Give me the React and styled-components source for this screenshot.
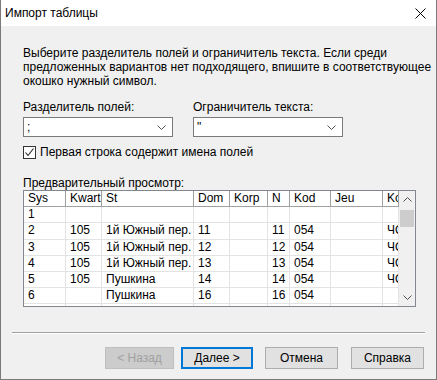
import React from 'react'
import styled, { createGlobalStyle } from 'styled-components'

const GlobalStyle = createGlobalStyle`
  html, body {
    margin: 0;
    padding: 0;
    background: #f0f0f0;
  }
  * {
    box-sizing: border-box;
  }
`

const columns = [
  { key: 'sys', title: 'Sys', width: 42 },
  { key: 'kwart', title: 'Kwart', width: 36 },
  { key: 'st', title: 'St', width: 92 },
  { key: 'dom', title: 'Dom', width: 36 },
  { key: 'korp', title: 'Korp', width: 38 },
  { key: 'n', title: 'N', width: 22 },
  { key: 'kod', title: 'Kod', width: 41 },
  { key: 'jeu', title: 'Jeu', width: 52 },
  { key: 'ko', title: 'Kod_ul', width: 16 },
]

const rows = [
  { sys: '1' },
  { sys: '2', kwart: '105', st: '1й Южный пер.', dom: '11', n: '11', kod: '054', ko: 'ЧО' },
  { sys: '3', kwart: '105', st: '1й Южный пер.', dom: '12', n: '12', kod: '054', ko: 'ЧО' },
  { sys: '4', kwart: '105', st: '1й Южный пер.', dom: '13', n: '13', kod: '054', ko: 'ЧО' },
  { sys: '5', kwart: '105', st: 'Пушкина', dom: '14', n: '14', kod: '054', ko: 'ЧО' },
  { sys: '6', st: 'Пушкина', dom: '16', n: '16', kod: '054' },
  { sys: '7', kwart: '105', st: 'Пушкина', dom: '18', n: '18', kod: '054', ko: 'ЧО' },
]

function Chevron({ up }) {
  return (
    <svg width="9" height="5" viewBox="0 0 9 5">
      <path
        d={up ? 'M0.5 4.5 L4.5 0.5 L8.5 4.5' : 'M0.5 0.5 L4.5 4.5 L8.5 0.5'}
        fill="none"
        stroke="#505050"
        strokeWidth="1"
      />
    </svg>
  )
}

function Combo({ value }) {
  return (
    <ComboBox>
      <ComboValue>{value}</ComboValue>
      <Chevron />
    </ComboBox>
  )
}

function App() {
  return (
    <>
      <GlobalStyle />
      <Window>
        <TitleBar>
          <Title>Импорт таблицы</Title>
          <CloseButton>
            <svg width="11" height="11" viewBox="0 0 11 11">
              <path d="M0.5 0.5 L10.5 10.5 M10.5 0.5 L0.5 10.5" stroke="#000" strokeWidth="1" />
            </svg>
          </CloseButton>
        </TitleBar>

        <Body>
          <Content>
            <Description>
              Выберите разделитель полей и ограничитель текста. Если среди
              <br />
              предложенных вариантов нет подходящего, впишите в соответствующее
              <br />
              окошко нужный символ.
            </Description>

            <FieldRow>
              <Field>
                <Label>Разделитель полей:</Label>
                <Combo value=";" />
              </Field>
              <Field>
                <Label>Ограничитель текста:</Label>
                <Combo value={'"'} />
              </Field>
            </FieldRow>

            <CheckRow>
              <CheckBox>
                <svg width="11" height="11" viewBox="0 0 11 11">
                  <path d="M1.5 5.5 L4 8.5 L9.5 1.5" fill="none" stroke="#222" strokeWidth="1.1" />
                </svg>
              </CheckBox>
              <span>Первая строка содержит имена полей</span>
            </CheckRow>

            <PreviewLabel>Предварительный просмотр:</PreviewLabel>

            <GridFrame>
              <GridViewport>
                <Grid $cols={columns.map((c) => c.width + 'px').join(' ')}>
                  {columns.map((c) => (
                    <HeadCell key={c.key}>{c.title}</HeadCell>
                  ))}
                  {rows.map((r, i) =>
                    columns.map((c) => <Cell key={i + c.key}>{r[c.key] || ''}</Cell>)
                  )}
                </Grid>
              </GridViewport>
              <ScrollBar>
                <ScrollArrow>
                  <Chevron up />
                </ScrollArrow>
                <Thumb />
                <ScrollTrack />
                <ScrollArrow>
                  <Chevron />
                </ScrollArrow>
              </ScrollBar>
            </GridFrame>
          </Content>

          <Footer>
            <Separator />
            <ButtonRow>
              <Button $width={69} disabled>
                &lt; Назад
              </Button>
              <Button $width={72} $gap={7} $default>
                Далее &gt;
              </Button>
              <Button $width={73} $gap={12}>
                Отмена
              </Button>
              <Button $width={73} $gap={13}>
                Справка
              </Button>
            </ButtonRow>
          </Footer>
        </Body>
      </Window>
    </>
  )
}

const Window = styled.div`
  width: 437px;
  height: 380px;
  display: flex;
  flex-direction: column;
  border: 1px solid #7a7a7a;
  border-top: none;
  background: #f0f0f0;
  font-family: 'Liberation Sans', Arial, sans-serif;
  font-size: 12px;
  color: #000;
  overflow: hidden;
`

const TitleBar = styled.div`
  height: 26px;
  flex: none;
  display: flex;
  align-items: center;
  justify-content: space-between;
  background: #fff;
  padding: 0 10px 0 4px;
`

const Title = styled.div`
  font-size: 12px;
  line-height: 14px;
`

const CloseButton = styled.div`
  display: flex;
  align-items: center;
`

const Body = styled.div`
  flex: 1;
  display: flex;
  flex-direction: column;
`

const Content = styled.div`
  padding: 20px 20px 0 22px;
  display: flex;
  flex-direction: column;
`

const Description = styled.div`
  line-height: 14px;
  white-space: nowrap;
`

const FieldRow = styled.div`
  display: flex;
  gap: 20px;
  margin-top: 12px;
`

const Field = styled.div`
  display: flex;
  flex-direction: column;
  gap: 3px;
`

const Label = styled.div`
  line-height: 14px;
`

const ComboBox = styled.div`
  width: 150px;
  height: 20px;
  background: #fff;
  border: 1px solid #7a7a7a;
  display: flex;
  align-items: center;
  justify-content: space-between;
  padding: 0 6px 0 3px;
`

const ComboValue = styled.span`
  line-height: 14px;
`

const CheckRow = styled.div`
  display: flex;
  align-items: center;
  gap: 4px;
  margin-top: 8px;
  line-height: 14px;
`

const CheckBox = styled.div`
  width: 13px;
  height: 13px;
  background: #fff;
  border: 1px solid #333;
  display: flex;
  align-items: center;
  justify-content: center;
`

const PreviewLabel = styled.div`
  margin-top: 18px;
  line-height: 13px;
`

const GridFrame = styled.div`
  width: 393px;
  height: 117px;
  border: 1px solid #828790;
  display: flex;
  background: #fff;
`

const GridViewport = styled.div`
  flex: 1;
  overflow: hidden;
`

const Grid = styled.div`
  display: grid;
  grid-template-columns: ${(p) => p.$cols};
  grid-auto-rows: 16.2px;
`

const Cell = styled.div`
  border-right: 1px solid #e3e3e3;
  border-bottom: 1px solid #e3e3e3;
  padding-left: 4px;
  line-height: 14.5px;
  white-space: nowrap;
  overflow: hidden;
`

const HeadCell = styled(Cell)`
  border-right-color: #a0a0a0;
  border-bottom-color: #a0a0a0;
`

const ScrollBar = styled.div`
  width: 16px;
  flex: none;
  background: #f0f0f0;
  display: flex;
  flex-direction: column;
`

const ScrollArrow = styled.div`
  height: 17px;
  display: flex;
  align-items: center;
  justify-content: center;
`

const Thumb = styled.div`
  height: 17px;
  margin: 2px 1px 0;
  background: #cdcdcd;
`

const ScrollTrack = styled.div`
  flex: 1;
`

const Footer = styled.div`
  padding: 0 11px 0 11px;
  margin-top: auto;
  margin-bottom: 10px;
`

const Separator = styled.div`
  height: 2px;
  border-top: 1px solid #a0a0a0;
  border-bottom: 1px solid #fff;
`

const ButtonRow = styled.div`
  display: flex;
  justify-content: flex-end;
  margin-top: 13px;
  padding-right: 1px;
`

const Button = styled.button`
  width: ${(p) => p.$width}px;
  height: 22px;
  margin-left: ${(p) => p.$gap || 0}px;
  font-family: 'Liberation Sans', Arial, sans-serif;
  font-size: 12px;
  padding: 0;
  background: ${(p) => (p.disabled ? '#cccccc' : '#e1e1e1')};
  color: ${(p) => (p.disabled ? '#a0a0a0' : '#000')};
  border: ${(p) => (p.$default ? '2px solid #0078d7' : p.disabled ? '1px solid #bfbfbf' : '1px solid #adadad')};
`

export default App
